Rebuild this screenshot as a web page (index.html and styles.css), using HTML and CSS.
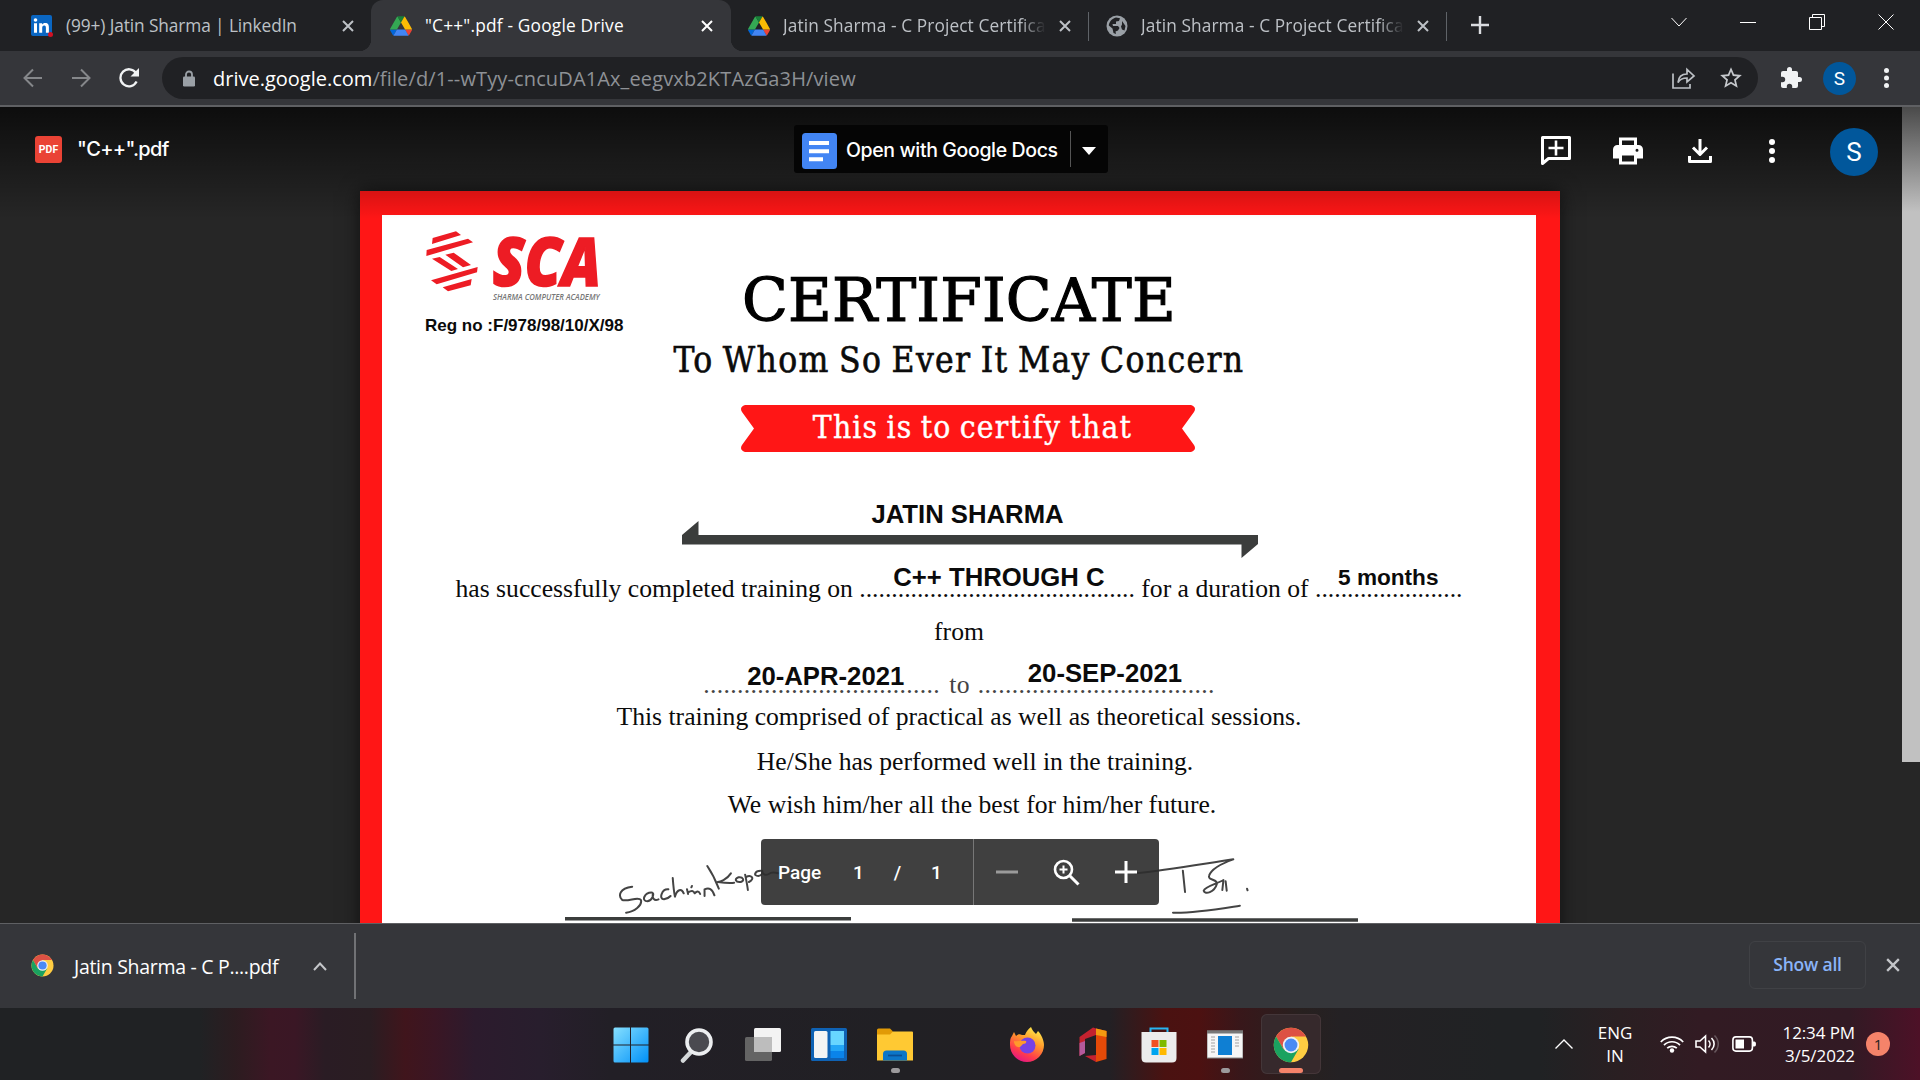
FILE: index.html
```html
<!DOCTYPE html>
<html lang="en">
<head>
<meta charset="utf-8">
<title>"C++".pdf - Google Drive</title>
<link rel="stylesheet" href="styles.css">
</head>
<body>
<svg class="defs" width="0" height="0">
  <symbol id="x" viewBox="0 0 12 12"><path d="M1 1l10 10M11 1L1 11" stroke="currentColor" stroke-width="2" fill="none"/></symbol>
  <symbol id="drive" viewBox="0 0 87.3 78">
    <path d="M6.6 66.85l3.85 6.65c.8 1.4 1.95 2.5 3.3 3.3L27.5 53H0c0 1.55.4 3.1 1.2 4.5z" fill="#0066da"/>
    <path d="M43.65 25L29.9 1.2c-1.35.8-2.5 1.9-3.3 3.3l-25.4 44A9 9 0 000 53h27.5z" fill="#34a853"/>
    <path d="M73.55 76.8c1.35-.8 2.5-1.9 3.3-3.3l1.6-2.75L86.1 57.5c.8-1.4 1.2-2.95 1.2-4.5H59.8l5.85 11.5z" fill="#ea4335"/>
    <path d="M43.65 25L57.4 1.2C56.05.4 54.5 0 52.9 0H34.4c-1.6 0-3.15.45-4.5 1.2z" fill="#188038"/>
    <path d="M59.8 53H27.5L13.75 76.8c1.35.8 2.9 1.2 4.5 1.2h50.8c1.6 0 3.15-.45 4.5-1.2z" fill="#4285f4"/>
    <path d="M73.4 26.5l-12.7-22c-.8-1.4-1.95-2.5-3.3-3.3L43.65 25 59.8 53h27.45c0-1.55-.4-3.1-1.2-4.5z" fill="#fbbc04"/>
  </symbol>
  <symbol id="chrome" viewBox="0 0 48 48">
    <circle cx="24" cy="24" r="23" fill="#ffcd42"/>
    <path d="M4.1 12.5A23 23 0 0143.9 12.5H24l-10 17.2z" fill="#dd5144"/>
    <path d="M4.1 12.5A23 23 0 0024 47l10-17.3H14z" fill="#1aa260"/>
    <circle cx="24" cy="24" r="11" fill="#f1f1f1"/><circle cx="24" cy="24" r="8.6" fill="#4a8af4"/>
  </symbol>
  <symbol id="dots" viewBox="0 0 8 24"><circle cx="4" cy="3" r="3"/><circle cx="4" cy="12" r="3"/><circle cx="4" cy="21" r="3"/></symbol>
</svg>

<header class="tabs">
  <div class="tab first">
    <svg class="fav" viewBox="0 0 22 22"><rect width="21" height="21" rx="2" fill="#0a66c2"/><path d="M3 8.2h3v9.6H3zM8.2 8.2h2.9v1.3c.6-1 1.700-1.600 3.100-1.600 3 0 3.700 1.900 3.700 4.500v5.400h-3v-4.800c0-1.300-.2-2.500-1.700-2.500s-2 1.200-2 2.500v4.800h-3z" fill="#fff"/><circle cx="4.500" cy="5" r="1.800" fill="#fff"/><circle cx="19.500" cy="19.500" r="2.500" fill="#d11124"/></svg>
    <span class="label">(99+) Jatin Sharma | LinkedIn</span><svg class="close"><use href="#x"/></svg>
  </div>
  <div class="tab active">
    <svg class="fav"><use href="#drive"/></svg>
    <span class="label drive">"C++".pdf - Google Drive</span><svg class="close"><use href="#x"/></svg>
  </div>
  <div class="tab sep">
    <svg class="fav"><use href="#drive"/></svg>
    <span class="label fade">Jatin Sharma - C Project Certificate</span><svg class="close"><use href="#x"/></svg>
  </div>
  <div class="tab sep">
    <svg class="fav" viewBox="0 0 22 22"><circle cx="11" cy="11" r="10.500" fill="#9aa0a6"/><path d="M10 2.500l4 .8-1 2.600-3 .6v2.500H6.500l.5 2h5l1.500 2-1.500 2.500-2.500 1 .5 2.500-2.500-1-1-4.500-3.700-3C3 7 6 3.500 10 2.500zM16 6l3.500 5-1 4.500-2.500-1-1-3 1-2z" fill="#202124"/></svg>
    <span class="label fade">Jatin Sharma - C Project Certificate</span><svg class="close"><use href="#x"/></svg>
  </div>
  <svg class="newtab" viewBox="0 0 18 18"><path d="M9 0v18M0 9h18" stroke="#dadce0" stroke-width="2.400"/></svg>
  <div class="win">
    <svg viewBox="0 0 16 16"><path d="M.5 4L8 12l7.500-8"/></svg>
    <svg viewBox="0 0 16 16"><path d="M0 8.500h16"/></svg>
    <svg viewBox="0 0 16 16"><path d="M.5 3.500h12v12H.5zM3.500 3.500v-3h12v12h-3"/></svg>
    <svg viewBox="0 0 16 16"><path d="M.5.5l15 15M15.500.5l-15 15"/></svg>
  </div>
</header>

<nav class="toolbar">
  <div class="navbtns">
    <svg viewBox="0 0 20 20"><path d="M19 10H2M10 1.500L1.500 10l8.500 8.500" class="dim"/></svg>
    <svg viewBox="0 0 20 20"><path d="M1 10h17M10 1.500l8.500 8.500-8.500 8.500" class="dim"/></svg>
    <svg viewBox="0 0 20 20"><path d="M17.600 13.500A8.500 8.500 0 1117 5" stroke="#f1f3f4" stroke-width="2.300"/><path d="M20 0v8.500h-8.500z" fill="#f1f3f4"/></svg>
  </div>
  <div class="omni">
    <svg class="lock" viewBox="0 0 12 16"><path d="M3 7V4a3 3 0 016 0v3" fill="none" stroke="#9aa0a6" stroke-width="1.800"/><rect y="6" width="12" height="10" rx="1.300" fill="#9aa0a6"/></svg>
    <span class="url"><b>drive.google.com</b>/file/d/1--wTyy-cncuDA1Ax_eegvxb2KTAzGa3H/view</span>
    <svg class="share" viewBox="0 0 24 22"><path d="M1 6.500V21h17v-4M6 15.500c.5-6 4-8.500 9-8.500V2.500l7 6.500-7 6V11c-4 0-7 1-9 4.500z" fill="none" stroke="#bdc1c6" stroke-width="1.700"/></svg>
    <svg class="star" viewBox="0 0 24 24"><path d="M22 9.240l-7.190-.62L12 2 9.190 8.630 2 9.240l5.460 4.730L5.820 21 12 17.270 18.180 21l-1.630-7.030zM12 15.400l-3.760 2.270 1-4.280-3.320-2.880 4.380-.38L12 6.100l1.710 4.040 4.380.38-3.320 2.880 1 4.280z" fill="#c6c9cd"/></svg>
  </div>
  <svg class="puzzle" viewBox="1 1 22 22"><path d="M20.500 11H19V7c0-1.100-.9-2-2-2h-4V3.500a2.500 2.500 0 00-5 0V5H4a2 2 0 00-2 2v3.800h1.500a2.700 2.700 0 010 5.400H2V20c0 1.100.9 2 2 2h3.800v-1.500a2.700 2.700 0 015.400 0V22H17a2 2 0 002-2v-4h1.500a2.500 2.500 0 000-5z" fill="#f1f3f4"/></svg>
  <span class="avatar small">S</span>
  <svg class="menu"><use href="#dots"/></svg>
</nav>

<main class="viewer">
  <div class="stage">
    <div class="topbar">
      <div class="file"><span class="pdf">PDF</span><span class="fname">"C++".pdf</span></div>
      <div class="openwith">
        <svg viewBox="0 0 35 36"><rect width="35" height="36" rx="3.500" fill="#4285f4"/><path d="M7 8h20v4H7zM7 16.200h20v4H7zM7 24.200h14v4H7z" fill="#fff"/></svg>
        <span>Open with Google Docs</span><i></i>
        <svg class="tri" viewBox="0 0 14 8"><path d="M0 0h14L7 8z" fill="#fff"/></svg>
      </div>
      <div class="actions">
        <svg viewBox="0 0 30 30"><path d="M1.500 1.500h27v21h-21l-6 5z" fill="none" stroke="#fff" stroke-width="3" stroke-linejoin="round"/><path d="M15 4.500v15M7.500 12h15" stroke="#fff" stroke-width="2.600"/></svg>
        <svg viewBox="2 2.500 20 19"><path d="M19 8h-1V3H6v5H5a3 3 0 00-3 3v6h4v4h12v-4h4v-6a3 3 0 00-3-3zM8 5h8v3H8zm8 12v2H8v-4h8zm2-4.500a1 1 0 110-2 1 1 0 010 2z" fill="#fff"/></svg>
        <svg viewBox="0 0 30 30"><path d="M15 3v15M8 11.500l7 7 7-7M4.500 20v5.500h21V20" fill="none" stroke="#fff" stroke-width="3" stroke-linejoin="round"/></svg>
        <svg viewBox="0 0 30 30"><g fill="#fff"><circle cx="15" cy="6" r="3"/><circle cx="15" cy="15" r="3"/><circle cx="15" cy="24" r="3"/></g></svg>
      </div>
      <span class="avatar">S</span>
    </div>

    <article class="cert">
      <div class="paper">
        <div class="head">
          <div class="brand">
            <svg viewBox="225 150 530 215">
              <g fill="#ed1c24">
                <path d="M248 174l70-20 15 11-87 27zM230 210l124-34 15 11-140 41zM286 224l25-6 52 37-24 7zM246 236l23-5 55 36-20 6zM243 301l140-40-2 16-121 36zM278 322l87-25-3 19-68 18z"/>
                <text x="428" y="317" class="sca" textLength="325" lengthAdjust="spacingAndGlyphs">SCA</text>
              </g>
              <text x="429" y="359" class="aca" textLength="320" lengthAdjust="spacingAndGlyphs">SHARMA COMPUTER ACADEMY</text>
            </svg>
            <p class="reg">Reg no :F/978/98/10/X/98</p>
          </div>
          <div class="titles">
            <h1>CERTIFICATE</h1>
            <h2>To Whom So Ever It May Concern</h2>
          </div>
        </div>
        <div class="ribbon">
          <svg viewBox="0 0 454 47"><path d="M4 0h446q6 2 3 7l-12 16.500L453 40q3 5-3 7H4q-6-2-3-7l12-16.500L1 7Q-2 2 4 0z" fill="#ff1616"/></svg>
          <span>This is to certify that</span>
        </div>
        <p class="name">JATIN SHARMA</p>
        <svg class="arrow" viewBox="0 0 576 37"><path d="M0 14L16.500 0v14H576v9l-16.500 14V23.500H0z" fill="#3b3d3c"/></svg>
        <p class="line l1">has successfully completed training on <span class="blank">...........................................<b class="v1">C++ THROUGH C</b></span> for a duration of <span class="blank">.......................<b class="v2">5 months</b></span></p>
        <p class="line l2">from</p>
        <p class="line l3"><span class="blank">...................................<b class="v3">20-APR-2021</b></span><em>to</em><span class="blank">...................................<b class="v4">20-SEP-2021</b></span></p>
        <p class="line l4">This training comprised of practical as well as theoretical sessions.</p>
        <p class="line l5">He/She has performed well in the training.</p>
        <p class="line l6">We wish him/her all the best for him/her future.</p>
        <svg class="signs" viewBox="382 820 1154 103">
          <path d="M565 917h286v3.500H565zM1072 918.300h286v3.400h-286z" fill="#3b3d3c"/>
          <g class="ink" transform="translate(540 820) scale(.5485 .3333)">
            <path d="M168 200C145 204 142 228 150 240C160 246 180 228 184 240C187 256 172 276 157 278M205 218C190 216 184 244 196 244C206 240 207 222 206 220C204 234 208 244 216 238M234 208C222 206 216 238 226 238C232 236 236 232 238 228M242 174C243 196 244 214 246 230C250 208 258 204 262 220M268 208L270 222M276 202l1-4M270 217c6-6 10-6 12 3c4-8 8-8 10 2M300 228l0-20c8-6 14-2 18 18M305 138C314 160 320 180 326 206M348 160C340 180 328 186 324 186C334 188 346 190 354 188M362 172c-8 4-6 16 4 14c8-4 4-16-4-14M374 164c2 16 4 32 5 46M375 172c10-10 18 4 6 14M402 152c-10 0-14 16-4 16c8-2 8-12 7-16c0 10 6 16 12 10c8-10 12-2 18-2"/>
            <path d="M1085 160C1140 152 1200 134 1264 118C1240 132 1224 148 1220 166C1216 182 1236 176 1234 192C1230 216 1212 226 1210 212C1212 200 1236 190 1246 180L1244 210M1250 184l2 28M1172 152L1176 216M1154 278C1190 280 1240 266 1276 257M1289 206l1 5"/>
          </g>
        </svg>
      </div>
    </article>

    <div class="pager">
      <span class="pg">Page</span><span>1</span><span>/</span><span>1</span>
      <div class="zoomset">
        <svg viewBox="0 0 22 22"><path d="M0 11h22" stroke="#9b9b9b" stroke-width="3"/></svg>
        <svg class="mag" viewBox="0 0 27 27"><g fill="none" stroke="#fff"><circle cx="10.500" cy="10.500" r="8.500" stroke-width="2.600"/><path d="M17 17l8.500 8.500" stroke-width="3"/><path d="M10.500 6.500v8M6.500 10.500h8" stroke-width="2"/></g></svg>
        <svg viewBox="0 0 22 22"><path d="M0 11h22M11 0v22" stroke="#fff" stroke-width="3"/></svg>
      </div>
    </div>
  </div>
  <div class="scroll"><div class="thumb"></div></div>
</main>

<section class="downloads">
  <svg class="dlicon"><use href="#chrome"/></svg>
  <span class="dlname">Jatin Sharma - C P....pdf</span>
  <svg class="caret" viewBox="0 0 14 9"><path d="M1 8l6-6.500L13 8" fill="none" stroke="#c4c6c9" stroke-width="2"/></svg>
  <i class="dldiv"></i>
  <button class="showall">Show all</button>
  <svg class="dlclose"><use href="#x"/></svg>
</section>

<footer class="taskbar">
  <div class="apps">
    <div class="app"><svg viewBox="0 0 36 36"><defs><linearGradient id="wg" x2="1" y2="1"><stop stop-color="#86e0ff"/><stop offset="1" stop-color="#0090f8"/></linearGradient></defs><path d="M.5 2q0-1.500 1.500-1.500h15v17H.5zM18 .5h16q1.500 0 1.500 1.500v15.500H18zM.5 18.500H17v17H2q-1.500 0-1.500-1.500zM18 18.500h17.500V34q0 1.500-1.500 1.500H18z" fill="url(#wg)"/></svg></div>
    <div class="app"><svg viewBox="0 0 36 36"><path d="M12 25l-8 8.500" stroke="#d4d8da" stroke-width="4.500" stroke-linecap="round"/><circle cx="20" cy="15" r="12" fill="#4a4a50" stroke="#eceef0" stroke-width="3.600"/></svg></div>
    <div class="app"><svg viewBox="0 0 36 36"><rect x="9" y="1" width="27" height="24" rx="1.500" fill="#f3f3f3"/><rect y="10" width="27" height="24" rx="1.500" fill="#646464"/><path d="M9 10h18v15H9z" fill="#bdbdbd"/></svg></div>
    <div class="app"><svg viewBox="0 0 36 36"><rect y="1" width="36" height="33" rx="1.500" fill="#0f62b4"/><rect x="3" y="4" width="13.500" height="27" rx="1.500" fill="#f4f4f4"/><path d="M19.500 4H33v14H19.500z" fill="#67d6ff"/><path d="M19.500 18H33v6H19.500z" fill="#22a6f6"/><path d="M19.500 24H33v7H19.500z" fill="#0a84ea"/></svg></div>
    <div class="app run"><svg viewBox="0 0 36 36"><path d="M0 3q0-1.500 1.500-1.500H13l3 3V9H0z" fill="#e19a06"/><path d="M0 7.500h13l3-3h19q1 0 1 1V33.500H0z" fill="#ffc933"/><path d="M6 33.500V27q0-3.500 3.500-3.500h17Q30 23.500 30 27v6.500z" fill="#0c76c8"/><path d="M11 28.500h14" stroke="#0a4f94" stroke-width="1.700"/></svg></div>
    <div class="app"></div>
    <div class="app"><svg viewBox="0 0 36 36"><defs><linearGradient id="ff" x1=".8" y1="0" x2=".3" y2="1"><stop stop-color="#fff44f"/><stop offset=".4" stop-color="#ff9a2b"/><stop offset=".75" stop-color="#ff3c4b"/><stop offset="1" stop-color="#e31587"/></linearGradient></defs><path d="M3 9l2-4 2 4c2-2 4-2 6-1l3 0c1-3 3-6 6-8 1 3 3 5 5 7l2-3c3 3 6 9 6 14a17 17 0 01-34 0C1 14 1 11 3 9z" fill="url(#ff)"/><circle cx="18.500" cy="18.500" r="8" fill="#7542e5"/><path d="M5 14c4 1 8-1 12 0 1 2-1 3-3 3l-3 3c-4 1-6-3-6-6z" fill="#ff9a2b"/></svg></div>
    <div class="app"><svg viewBox="0 0 36 36"><path d="M18 .5L21 1.500V8l-11 4v14l-5.500 3V10zM10 29l11-1v7z" fill="#c4222f"/><path d="M4.500 16L10 14v12l-5.500 3z" fill="#b55a9c"/><path d="M21 1.500L31.500 4v28L21 35z" fill="#e54a08"/><path d="M21 1.500L31.500 4v6L21 8z" fill="#f49a10"/></svg></div>
    <div class="app"><svg viewBox="0 0 36 36"><path d="M9.500 7V1.500h17V7" fill="none" stroke="#27b5f2" stroke-width="2"/><path d="M.5 5h35v26q0 4.500-4.500 4.500H5Q.5 35.500.5 31z" fill="#ececec"/><path d="M10.500 13h7v7h-7z" fill="#f25022"/><path d="M18.500 13h7v7h-7z" fill="#7fba00"/><path d="M10.500 21h7v7h-7z" fill="#00a4ef"/><path d="M18.500 21h7v7h-7z" fill="#ffb900"/></svg></div>
    <div class="app run"><svg viewBox="0 0 36 36"><path d="M0 4h36v27H0z" fill="#f6f6f6" stroke="#888"/><path d="M0 3.500h36v3H0z" fill="#777"/><rect x="11" y="9" width="14" height="19" fill="#0f7fd3"/><path d="M4 10h4M4 13h4M4 16h4M4 19h4M4 22h4M4 25h4M28 10h4M28 13h4M28 16h4M28 19h4" stroke="#ccc" stroke-width="1.800"/></svg></div>
    <div class="app on"><svg><use href="#chrome"/></svg></div>
  </div>
  <div class="tray">
    <svg class="up" viewBox="0 0 18 10"><path d="M.5 9.500L9 1l8.500 8.500" fill="none" stroke="#fff" stroke-width="1.400"/></svg>
    <div class="lang">ENG<br>IN</div>
    <svg class="wifi" viewBox="0 0 24 18"><g fill="none" stroke="#fff" stroke-width="1.700"><path d="M.8 7a15.500 15.500 0 0122.400 0M4 10.200a11 11 0 0116 0M7.200 13.200a7 7 0 019.600 0"/></g><circle cx="12" cy="15.500" r="2.200" fill="#fff"/></svg>
    <svg class="vol" viewBox="0 0 25 20"><g fill="none" stroke="#fff" stroke-width="1.600"><path d="M1 7h4l5.500-5v16L5 13H1zM13.500 6.500c2 2 2 5 0 7M16.500 4c3.500 3.500 3.500 8.500 0 12"/><path d="M19.500 1.500c5 5 5 12 0 17" stroke="#66565c"/></g></svg>
    <svg class="bat" viewBox="0 0 24 16"><rect x=".9" y=".9" width="19.500" height="14.200" rx="3" fill="none" stroke="#fff" stroke-width="1.600"/><rect x="3.500" y="3.500" width="8.500" height="9" fill="#fff"/><path d="M21 5.500h1.500q1.500 0 1.500 2.500t-1.500 2.500H21z" fill="#fff"/></svg>
    <div class="clock">12:34 PM<br>3/5/2022</div>
    <span class="badge">1</span>
  </div>
</footer>
</body>
</html>
```
FILE: styles.css
```css
* { box-sizing: border-box; margin: 0; padding: 0; }
body {
  width: 1920px; height: 1080px; overflow: hidden;
  display: flex; flex-direction: column;
  background: #202124; color: #fff;
  font-family: "Open Sans", "Noto Sans", sans-serif;
}
svg { display: block; flex: none; }
.defs { position: absolute; }

/* tab strip */
.tabs { height: 51px; flex: none; display: flex; background: #202124; }
.tab { display: flex; align-items: center; width: 358px; height: 51px; padding-left: 17px; color: #bdc1c6; }
.tab.first { width: 371px; padding-left: 31px; }
.tab.active {
  width: 360px; padding-left: 19px; color: #fff; background: #35363a;
  border-radius: 12px 12px 0 0; position: relative;
}
.tab.active::before, .tab.active::after {
  content: ""; position: absolute; bottom: 0; width: 12px; height: 12px;
}
.tab.active::before { left: -12px; background: radial-gradient(circle at 0 0, transparent 12px, #35363a 12.5px); }
.tab.active::after { right: -12px; background: radial-gradient(circle at 100% 0, transparent 12px, #35363a 12.5px); }
.tab.sep { background: linear-gradient(#5f6368, #5f6368) right 0 top 12px / 1px 29px no-repeat; }
.fav { width: 22px; height: 22px; }
.label { width: 276px; margin-left: 13px; font-size: 17.300px; line-height: 24px; white-space: nowrap; overflow: hidden; letter-spacing: -.1px; }
.label.fade { width: 263px; letter-spacing: .1px; -webkit-mask-image: linear-gradient(90deg, #000 90%, transparent); mask-image: linear-gradient(90deg, #000 90%, transparent); }
.label.drive { letter-spacing: .2px; }
.close { width: 12px; height: 12px; }
.sep .close { margin-left: 13px; }
.newtab { width: 18px; height: 18px; margin: 16px 0 0 24px; }
.win { display: flex; gap: 53px; margin: 14px 26px 0 auto; }
.win svg { width: 16px; height: 16px; fill: none; stroke: #fff; stroke-width: 1; }

/* toolbar */
.toolbar { height: 56px; flex: none; display: flex; align-items: center; background: #35363a; border-bottom: 2px solid #5f6063; }
.navbtns { display: flex; gap: 28px; padding-left: 23px; width: 162px; }
.navbtns svg { width: 20px; height: 20px; fill: none; }
.dim { stroke: #85878a; stroke-width: 2; }
.omni { width: 1596px; height: 42px; border-radius: 21px; background: #202124; display: flex; align-items: center; }
.lock { width: 12px; height: 17px; margin-left: 21px; }
.url { flex: 1; margin-left: 18px; padding-top: 2px; font-size: 20px; color: #8e9196; white-space: nowrap; letter-spacing: .13px; line-height: 30px; }
.url b { font-weight: 400; color: #fff; letter-spacing: 0; }
.share { width: 24px; height: 22px; margin-right: 22px; }
.star { width: 26px; height: 26px; margin-right: 14px; }
.puzzle { width: 22px; height: 22px; margin-left: 22px; }
.avatar { display: grid; place-items: center; width: 48px; height: 48px; border-radius: 50%; background: #01579b; font: 26px Roboto, sans-serif; }
.avatar.small { width: 33px; height: 33px; font-size: 19px; margin-left: 21px; }
.menu { width: 7px; height: 20px; margin-left: 27px; fill: #f1f3f4; }

/* viewer */
.viewer { height: 816px; flex: none; display: flex; background: #262626; overflow: hidden; }
.stage { position: relative; width: 1902px; height: 816px; overflow: hidden; }
.stage::before {
  content: ""; position: absolute; inset: 0 0 auto; height: 112px; z-index: 1;
  background: linear-gradient(rgba(0,0,0,.66), rgba(0,0,0,.12) 80%, transparent);
}
.topbar { position: relative; z-index: 2; display: flex; align-items: center; height: 84px; padding-top: 3px; font-family: Inter, Roboto, sans-serif; }
.file { display: flex; align-items: center; width: 794px; padding-left: 35px; margin-top: -2px; }
.pdf { width: 27px; height: 27px; border-radius: 3px; background: #ea4335; font: 700 10.500px/28px Roboto, sans-serif; text-align: center; }
.fname { margin: -2px 0 0 15px; font-size: 20px; font-weight: 500; letter-spacing: -.7px; }
.openwith { display: flex; align-items: center; width: 314px; height: 48px; margin-top: -3px; padding-left: 8px; background: #050505; border-radius: 3px; }
.openwith svg { width: 35px; height: 36px; margin-top: 3px; }
.openwith span { width: 224px; margin: 2px 0 0 9px; font-size: 19.500px; font-weight: 500; letter-spacing: -.37px; white-space: nowrap; }
.openwith i { width: 1px; height: 36px; background: #555; }
.openwith .tri { width: 14px; height: 8px; margin: 4px 0 0 11px; }
.actions { display: flex; gap: 42px; margin-left: 433px; }
.actions svg { width: 30px; height: 30px; }
.topbar .avatar { margin-left: 43px; margin-top: 2px; }

.scroll { width: 18px; background: #262626; }
.thumb { height: 655px; background: linear-gradient(#4a4a4a, #c1c1c1 105px); }

/* certificate */
.cert { width: 1200px; height: 760px; margin-left: 360px; background: #ff1616; padding: 24px 24px 0 22px; box-shadow: 0 0 18px rgba(0,0,0,.6); color: #0b0b0b; }
.paper { display: flex; flex-direction: column; align-items: center; height: 736px; background: #fff; }
.head { display: grid; width: 1154px; height: 190px; }
.brand { grid-area: 1 / 1; justify-self: start; padding: 15px 0 0 43px; }
.brand svg { width: 176.700px; height: 71.700px; overflow: visible; }
.sca { font: italic 800 200px "Open Sans", sans-serif; stroke: #ed1c24; stroke-width: 5; }
.aca { font: italic 600 27px "Open Sans", sans-serif; fill: #777; }
.reg { font: 700 17px/24px "Liberation Sans", Arial, sans-serif; margin-top: 12px; }
.titles { grid-area: 1 / 1; text-align: center; padding-top: 55px; }
h1, h2, .ribbon span { font-family: "DejaVu Serif", serif; font-weight: 400; }
h1 { font-size: 60px; line-height: 60px; letter-spacing: .1px; color: #000; -webkit-text-stroke: 1.200px #000; }
h2 { font-family: "DejaVu Serif Condensed", "DejaVu Serif", serif; font-size: 35px; line-height: 40px; margin-top: 10px; letter-spacing: 1.350px; word-spacing: -2px; -webkit-text-stroke: .6px #0b0b0b; }
.ribbon { display: grid; width: 454px; height: 47px; margin-left: 18px; }
.ribbon > * { grid-area: 1 / 1; }
.ribbon span { font-family: "DejaVu Serif Condensed", "DejaVu Serif", serif; font-size: 31.500px; line-height: 44px; color: #fff; text-align: center; letter-spacing: 1.200px; word-spacing: -2px; padding-left: 9px; -webkit-text-stroke: .4px #fff; }
.name { font: 700 25.700px/30px "Liberation Sans", Arial, sans-serif; margin: 47px 0 0 17px; }
.arrow { width: 576px; height: 37px; margin: -8px 0 0 22px; }
.line { font: 25.650px/30px "Liberation Serif", "Times New Roman", serif; white-space: nowrap; }
.blank { position: relative; }
.blank b { position: absolute; font: 700 25.700px/30px "Liberation Sans", Arial, sans-serif; letter-spacing: 0; color: #0b0b0b; }
.l1 { margin-top: 16px; }
.v1 { left: 34px; bottom: 11px; }
.blank .v2 { left: 23px; bottom: 10px; font-size: 22.600px; }
.l2 { margin-top: 13px; }
.l3 { margin-top: 23px; color: #444; letter-spacing: .36px; }
.l3 em { font-style: normal; margin: 0 8px 0 9px; }
.v3 { left: 44px; bottom: 8px; }
.v4 { left: 50px; bottom: 11px; }
.l4 { margin-top: 2px; }
.l5 { margin: 15px 0 0 32px; }
.l6 { margin: 13px 0 0 26px; }
.signs { width: 1154px; height: 103px; }
.ink path { fill: none; stroke: #444; stroke-width: 2px; vector-effect: non-scaling-stroke; stroke-linecap: round; stroke-linejoin: round; }

/* page controls floating over the document */
.pager {
  position: absolute; left: 761px; top: 732px; width: 398px; height: 66px; z-index: 3;
  display: flex; align-items: center; padding-left: 17px; border-radius: 4px;
  background: rgba(45,45,45,.91); font: 500 19px Roboto, sans-serif;
}
.pager > span { width: 39px; text-align: center; }
.pager .pg { width: 61px; text-align: left; }
.zoomset { display: flex; align-items: center; justify-content: space-between; width: 186px; height: 66px; margin-left: auto; padding: 0 22px; border-left: 1px solid #777; }
.zoomset svg { width: 22px; height: 22px; }
.zoomset .mag { width: 27px; height: 27px; }

/* downloads shelf */
.downloads { height: 85px; flex: none; display: flex; align-items: center; background: #35363a; border-top: 1px solid #5f6063; }
.dlicon { width: 23px; height: 23px; margin: -2px 0 0 31px; }
.dlname { width: 239px; margin-left: 20px; font-size: 19.500px; letter-spacing: -.3px; white-space: nowrap; }
.caret { width: 14px; height: 9px; }
.dldiv { width: 2px; height: 66px; margin-left: 27px; background: #717275; }
.showall { width: 117px; height: 48px; margin-left: auto; margin-bottom: 2px; padding-bottom: 2px; background: none; border: 1px solid #404145; border-radius: 6px; color: #8ab4f8; font: 600 17.500px "Open Sans", sans-serif; letter-spacing: -.2px; }
.dlclose { width: 14px; height: 14px; margin: 0 20px 2px; color: #c4c6c9; }

/* taskbar */
.taskbar {
  height: 72px; flex: none; display: flex; align-items: center;
  background: linear-gradient(90deg, #202224 0, #202224 200px, #2c1c20 235px, #3b1724 270px, #3a1725 295px, #2a1c24 325px, #2a1d22 370px, #40151c 405px, #3a1624 435px, #2c1b2d 475px, #281e2d 540px, #221f26 610px, #212024 900px, #232024 1110px, #4a1211 1165px, #4c1111 1200px, #38171a 1240px, #28201f 1300px, #242124 1340px, #202224 1500px, #202224 1540px, #2a1f22 1620px, #321b23 1700px, #321a24 1850px, #4d1127 1920px);
}
.apps { display: flex; padding-left: 601px; gap: 6px; }
.app { position: relative; display: grid; place-items: center; width: 60px; height: 60px; padding-top: 2px; border-radius: 6px; }
.app svg { width: 36px; height: 36px; }
.app.on { background: #36292c; box-shadow: inset 0 0 0 1px #443639; }
.app.run::after, .app.on::after { content: ""; position: absolute; bottom: 1px; width: 9px; height: 5px; border-radius: 3px; background: #9c9a9c; }
.app.on::after { width: 24px; background: #f5836a; }
.tray { display: flex; align-items: center; margin-left: auto; padding-right: 30px; font-size: 17px; line-height: 23px; letter-spacing: -.1px; }
.up { width: 18px; height: 10px; }
.lang { width: 60px; margin-left: 12px; text-align: center; }
.wifi { width: 24px; height: 18px; margin-left: 15px; }
.vol { width: 25px; height: 20px; margin-left: 11px; }
.bat { width: 24px; height: 16px; margin-left: 12px; }
.clock { width: 76px; margin-left: 23px; text-align: right; white-space: nowrap; }
.badge { display: grid; place-items: center; width: 24px; height: 24px; margin-left: 11px; border-radius: 50%; background: #f5836a; color: #222; font-size: 15px; }
```
